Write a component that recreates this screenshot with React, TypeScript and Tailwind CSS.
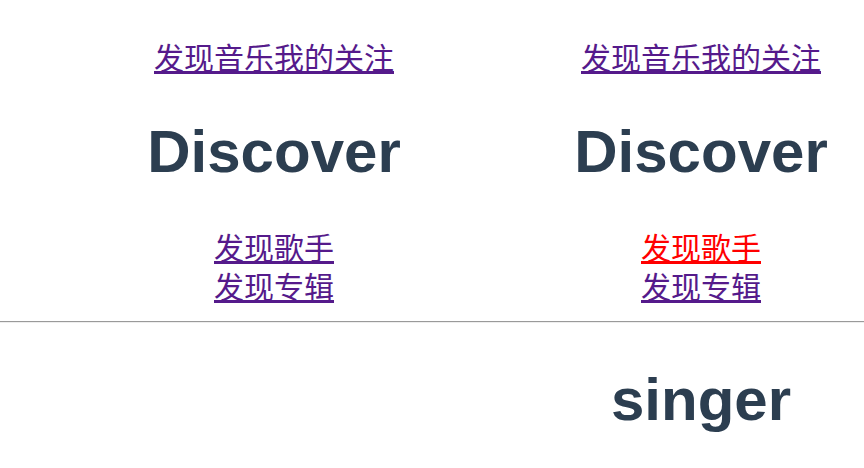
const cjk = "font-['Noto_Sans_CJK_SC','Noto_Sans',sans-serif]";
const head = "font-['Liberation_Sans',Arial,sans-serif] font-bold text-[60px] leading-[70px] text-[#2c3e50]";

function NavColumn({ activeSinger }: { activeSinger?: boolean }) {
  return (
    <div className="w-[320px] text-center">
      <div className={`${cjk} text-[30px] leading-[40px] mt-[36px]`}>
        <a href="#" className="underline text-[#551a8b]">发现音乐</a>
        <a href="#" className="underline text-[#551a8b]">我的关注</a>
      </div>
      <h1 className={`${head} mt-[41px]`}>Discover</h1>
      <div className={`${cjk} text-[30px] leading-[39px] mt-[40px]`}>
        <div>
          <a href="#" className={`underline ${activeSinger ? 'text-[#ff0000]' : 'text-[#551a8b]'}`}>发现歌手</a>
        </div>
        <div>
          <a href="#" className="underline text-[#551a8b]">发现专辑</a>
        </div>
      </div>
    </div>
  );
}

export default function App() {
  return (
    <div className="w-[864px] h-[468px] overflow-hidden bg-white">
      <div className="flex pl-[114px] gap-[107px]">
        <NavColumn />
        <NavColumn activeSinger />
      </div>
      <hr className="mt-[16px] border-0 border-t border-t-[#9a9a9a] border-b border-b-[#eeeeee] h-0" />
      <div className="flex pl-[114px] gap-[107px]">
        <div className="w-[320px]" />
        <div className="w-[320px] text-center">
          <h1 className={`${head} mt-[42px]`}>singer</h1>
        </div>
      </div>
    </div>
  );
}
